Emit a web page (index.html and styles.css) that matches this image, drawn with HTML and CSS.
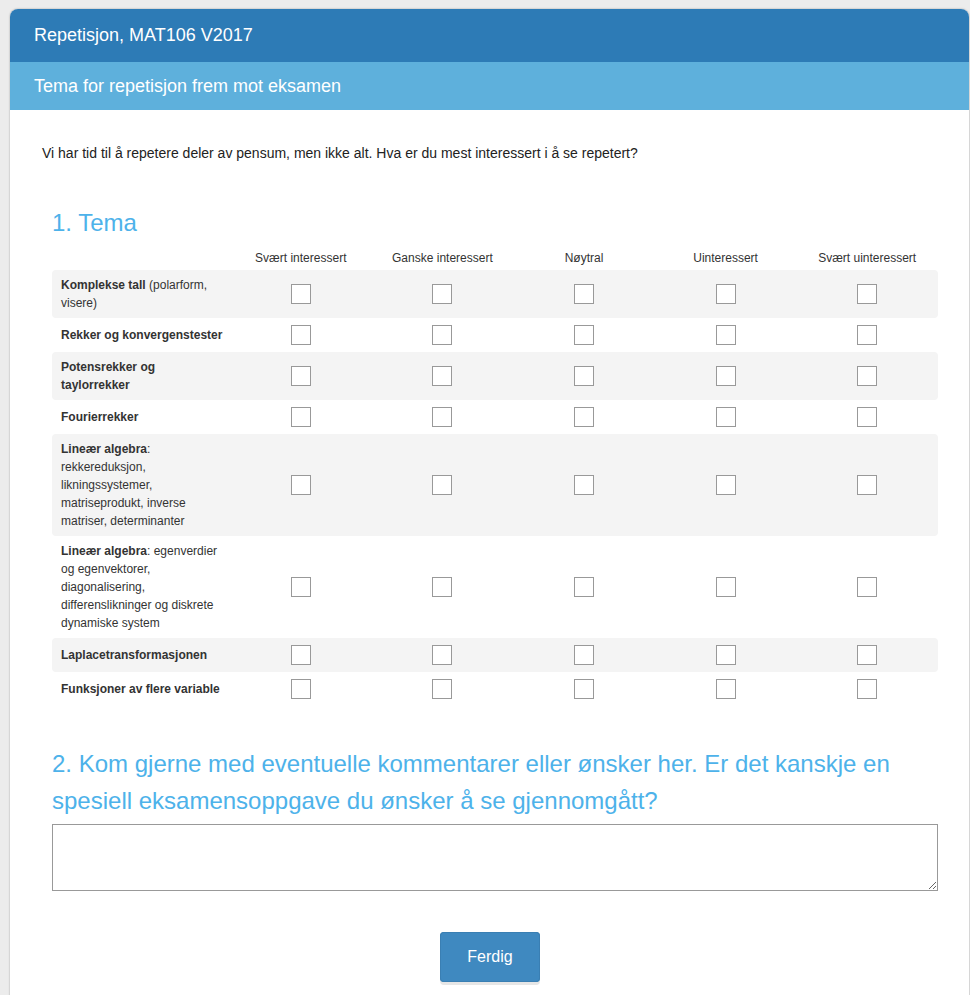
FILE: index.html
```html
<!DOCTYPE html>
<html lang="no">
<head>
<meta charset="utf-8">
<title>Repetisjon, MAT106 V2017</title>
<link rel="stylesheet" href="styles.css">
</head>
<body>
<div class="card">
  <div class="title-bar">Repetisjon, MAT106 V2017</div>
  <div class="subtitle-bar">Tema for repetisjon frem mot eksamen</div>
  <div class="content">
    <p class="intro">Vi har tid til å repetere deler av pensum, men ikke alt. Hva er du mest interessert i å se repetert?</p>
    <div class="question q1">
      <h2 class="q-title">1. Tema</h2>
      <table class="matrix">
        <thead>
          <tr>
            <th class="label-col"></th>
            <th>Svært interessert</th>
            <th>Ganske interessert</th>
            <th>Nøytral</th>
            <th>Uinteressert</th>
            <th>Svært uinteressert</th>
          </tr>
        </thead>
        <tbody>
          <tr class="alt">
            <td class="label"><b>Komplekse tall</b> (polarform, visere)</td>
            <td><input type="checkbox"></td><td><input type="checkbox"></td><td><input type="checkbox"></td><td><input type="checkbox"></td><td><input type="checkbox"></td>
          </tr>
          <tr>
            <td class="label"><b>Rekker og konvergenstester</b></td>
            <td><input type="checkbox"></td><td><input type="checkbox"></td><td><input type="checkbox"></td><td><input type="checkbox"></td><td><input type="checkbox"></td>
          </tr>
          <tr class="alt">
            <td class="label"><b>Potensrekker og taylorrekker</b></td>
            <td><input type="checkbox"></td><td><input type="checkbox"></td><td><input type="checkbox"></td><td><input type="checkbox"></td><td><input type="checkbox"></td>
          </tr>
          <tr>
            <td class="label"><b>Fourierrekker</b></td>
            <td><input type="checkbox"></td><td><input type="checkbox"></td><td><input type="checkbox"></td><td><input type="checkbox"></td><td><input type="checkbox"></td>
          </tr>
          <tr class="alt">
            <td class="label"><b>Lineær algebra</b>: rekkereduksjon, likningssystemer, matriseprodukt, inverse matriser, determinanter</td>
            <td><input type="checkbox"></td><td><input type="checkbox"></td><td><input type="checkbox"></td><td><input type="checkbox"></td><td><input type="checkbox"></td>
          </tr>
          <tr>
            <td class="label"><b>Lineær algebra</b>: egenverdier og egenvektorer, diagonalisering, differenslikninger og diskrete dynamiske system</td>
            <td><input type="checkbox"></td><td><input type="checkbox"></td><td><input type="checkbox"></td><td><input type="checkbox"></td><td><input type="checkbox"></td>
          </tr>
          <tr class="alt">
            <td class="label"><b>Laplacetransformasjonen</b></td>
            <td><input type="checkbox"></td><td><input type="checkbox"></td><td><input type="checkbox"></td><td><input type="checkbox"></td><td><input type="checkbox"></td>
          </tr>
          <tr>
            <td class="label"><b>Funksjoner av flere variable</b></td>
            <td><input type="checkbox"></td><td><input type="checkbox"></td><td><input type="checkbox"></td><td><input type="checkbox"></td><td><input type="checkbox"></td>
          </tr>
        </tbody>
      </table>
    </div>
    <div class="question q2">
      <h2 class="q-title">2. Kom gjerne med eventuelle kommentarer eller ønsker her. Er det kanskje en spesiell eksamensoppgave du ønsker å se gjennomgått?</h2>
      <textarea class="comment"></textarea>
    </div>
    <div class="actions">
      <button class="btn" type="button">Ferdig</button>
    </div>
  </div>
</div>
</body>
</html>
```

FILE: styles.css
```css
html, body {
  margin: 0;
  padding: 0;
}
body {
  background: #ececec;
  font-family: "Liberation Sans", Arial, sans-serif;
  color: #333;
  padding: 9px 0 0 10px;
  overflow: hidden;
}
.card {
  width: 959px;
  background: #fff;
  border-radius: 8px 8px 0 0;
  box-shadow: 0 0 2px rgba(0, 0, 0, 0.35);
  overflow: hidden;
  min-height: 1000px;
}
.title-bar {
  background: #2d7bb6;
  color: #fff;
  font-size: 18px;
  height: 53px;
  line-height: 52px;
  padding-left: 24px;
}
.subtitle-bar {
  background: #5eb0dc;
  color: #fff;
  font-size: 18px;
  height: 48px;
  line-height: 48px;
  padding-left: 24px;
}
.content {
  padding: 0 31px 0 32px;
}
.intro {
  margin: 0;
  padding-top: 33px;
  font-size: 14px;
  line-height: 20px;
  color: #222;
}
.question {
  padding-left: 10px;
}
.q-title {
  margin: 0;
  font-weight: normal;
  color: #4db2ea;
  font-size: 24px;
  line-height: 37px;
}
.q1 .q-title {
  padding-top: 41px;
}
.matrix {
  width: 886px;
  border-collapse: separate;
  border-spacing: 0;
  table-layout: fixed;
  margin-top: 4px;
  font-size: 12px;
}
.matrix th {
  font-weight: normal;
  color: #333;
  text-align: center;
  height: 25px;
  padding: 0;
  vertical-align: middle;
}
.matrix th.label-col {
  width: 178px;
}
.matrix td {
  padding: 6px 0;
  text-align: center;
  vertical-align: middle;
  line-height: 18px;
}
.matrix td.label {
  text-align: left;
  padding: 6px 5px 6px 9px;
  color: #333;
}
.matrix tr.alt td {
  background: #f4f4f4;
}
.matrix tr.alt td:first-child {
  border-radius: 4px 0 0 4px;
}
.matrix tr.alt td:last-child {
  border-radius: 0 4px 4px 0;
}
.matrix input[type="checkbox"] {
  -webkit-appearance: none;
  appearance: none;
  display: block;
  width: 20px;
  height: 20px;
  margin: 1px auto;
  border: 1px solid #999;
  background: #fff;
  border-radius: 0;
  box-sizing: border-box;
}
.q2 {
  padding-top: 39px;
}
.comment {
  display: block;
  width: 886px;
  height: 67px;
  margin: 5px 0 0 0;
  box-sizing: border-box;
  border: 1px solid #999;
  font-family: "Liberation Sans", Arial, sans-serif;
  resize: both;
}
.actions {
  display: flex;
  justify-content: center;
  padding: 41px 0 20px 0;
}
.btn {
  width: 100px;
  height: 50px;
  background: #3f89c0;
  color: #fff;
  border: none;
  border-radius: 4px;
  font-family: "Liberation Sans", Arial, sans-serif;
  font-size: 16px;
  box-shadow: 0 3px 0 #e6e6e6, inset 0 0 0 1px #3a7fb3;
}
```
